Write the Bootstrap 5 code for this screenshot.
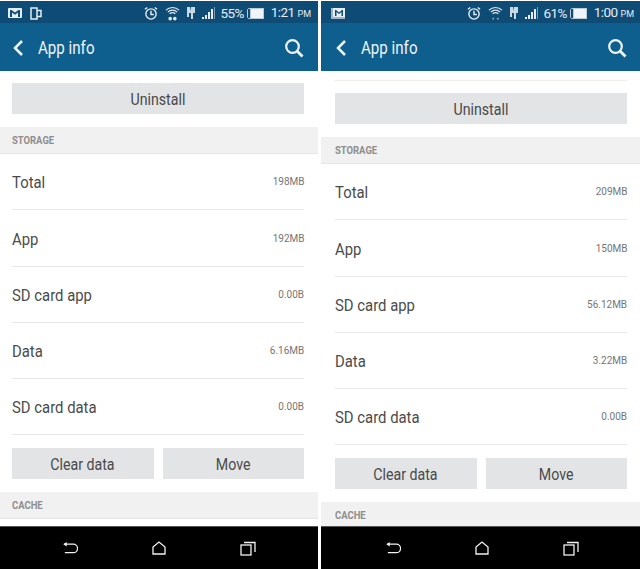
<!doctype html>
<html lang="en"><head><meta charset="utf-8"><title>App info</title>
<link rel="stylesheet" href="https://cdn.jsdelivr.net/npm/bootstrap@5.3.0/dist/css/bootstrap.min.css">
<style>
html,body{height:569px;overflow:hidden;background:#fff;font-family:Roboto,"Liberation Sans",sans-serif}
.shots{gap:3px;height:569px}
.phone{height:569px;overflow:hidden}
.phone-l{width:318px}.phone-r{width:319px}
.sbar{height:22px;margin-top:1px;background:#0e4b75;color:#e6eef4;font-size:13.5px;padding:2px 7px 0 8px;flex:none}
.sbar .pct{line-height:20px;letter-spacing:-.6px}
.sbar .clock{line-height:20px;letter-spacing:-.6px}
.sbar .ampm{font-size:9px;margin-left:3px;letter-spacing:0}
.g3{margin-left:3px}.g5{margin-left:5px}.g6{margin-left:6px}.g7{margin-left:7px}.g8{margin-left:8px}
.abar{height:48px;background:#0f5f8e;color:#eef4f8;flex:none;padding:2px 14px 0 12px}
.atitle{font-size:18px;margin:0 0 2px 14px;display:inline-block;transform:scaleX(.84);transform-origin:left center}
.scroll{flex:1 1 0;overflow:hidden;min-height:0}
.prerow-line{height:10px;border-bottom:1px solid #eeeeee;margin:0 13px 0 14px}
.pad-top{height:12px}
.gbtn{background:#e3e4e6;color:#4a4a4a;border:0;border-radius:0;height:31px;font-size:16.5px;padding:3px 0 0;display:flex;align-items:center;justify-content:center}
.gbtn span{display:inline-block;transform:scaleX(.86)}
.uwrap{padding:0 14px 0 12px}
.sect{background:#f1f1f1;color:#8e8e8e;font-size:10.5px;font-weight:700;padding:2px 0 0 12px;height:27px;margin-top:13px;display:flex;align-items:center;border-bottom:1px solid #e6e6e6}
.sect span{display:inline-block;transform:scaleX(.9);transform-origin:left center}
.irow{height:56.25px;margin:0 14px 0 12px;border-bottom:1px solid #e9e9e9;padding-top:3px}
.lbl{font-size:17px;color:#4b4b4b;display:inline-block;transform:scaleX(.875);transform-origin:left center}
.val{font-size:10.500px;color:#757575;display:inline-block;margin-bottom:2px;transform:scaleX(.95);transform-origin:right center}
.two{padding:13px 14px 0 12px;gap:9px}
.two .gbtn{flex:1 1 0}
.navb{height:43px;background:#000;flex:none;border-top:1px solid #555;padding-left:62px;gap:74px}
.phone-r .sbar{padding-left:10px;padding-right:6px}.phone-r .abar{padding-left:14px;padding-right:13px}
.phone-r .uwrap{padding:0 13px 0 14px}.phone-r .sect{padding-left:14px}
.phone-r .irow{margin:0 13px 0 14px}.phone-r .two{padding:13px 13px 0 14px}
.phone-r .navb{padding-left:64px}
</style></head><body>
<div class="d-flex shots">

<section class="phone phone-l d-flex flex-column">
 <div class="sbar d-flex align-items-center">
  <svg width="14" height="12" viewBox="0 0 14 12"><rect x="0" y="1" width="14" height="10" rx="1" fill="#e6eef4"/><path d="M2 3v7h2V5.500l3 2.200 3-2.200V10h2V3h-1.500L7 5.600 3.500 3z" fill="#0e4b75"/></svg>
  <svg class="g8" width="12" height="13" viewBox="0 0 12 13" fill="none" stroke="#e6eef4" stroke-width="1.500"><rect x="1" y="1" width="6" height="11"/><path d="M7 3.500h4v6H7"/></svg>
  <svg class="ms-auto" width="14" height="15" viewBox="0 0 15 16" fill="none" stroke="#e6eef4" stroke-width="1.500"><circle cx="7.500" cy="8.500" r="5.500"/><path d="M7.500 5v4h3M1 3.500 3.500 1.500M14 3.500 11.500 1.500"/></svg>
  <svg class="g7" width="15" height="16" viewBox="0 0 16 16" fill="none" stroke="#e6eef4" stroke-width="1.200"><path d="M1 5a10 10 0 0 1 14 0M3 7a7 7 0 0 1 10 0M5 9a4 4 0 0 1 6 0"/><circle cx="5.500" cy="14" r="1.300" fill="#e6eef4"/><circle cx="10.500" cy="14" r="1.300" fill="#e6eef4"/></svg>
  <svg class="g6" width="10" height="14" viewBox="0 0 10 14" fill="#c9d8e3"><path d="M1 1h3v4l1-4h4v6H7v6H5V7H3v4H1z"/></svg>
  <svg class="g6" width="14" height="12" viewBox="0 0 14 12" fill="#e6eef4"><rect x="0" y="10" width="2" height="2"/><rect x="3" y="8" width="2" height="4"/><rect x="6" y="5" width="2" height="7"/><rect x="9" y="2" width="2" height="10"/><rect x="12" y="0" width="1" height="12" opacity=".5"/></svg>
  <span class="pct g5">55%</span>
  <svg class="g3" width="17" height="11" viewBox="0 0 17 11" fill="none"><path d="M3 .5H1.500l-1 1v8l1 1H3" stroke="#b9cbd8"/><rect x="4" y="1" width="12.500" height="9" fill="#eef4f8"/><rect x="3.500" y=".5" width="13" height="10" stroke="#b9cbd8"/></svg>
  <span class="clock g7">1:21<span class="ampm">PM</span></span>
 </div>
 <div class="abar d-flex align-items-center">
  <svg width="12" height="18" viewBox="0 0 12 18" fill="none" stroke="#eef4f8" stroke-width="2.500"><path d="M10 2 3 9l7 7"/></svg>
  <span class="atitle">App info</span>
  <svg class="ms-auto" width="20" height="20" viewBox="0 0 20 20" fill="none" stroke="#eef4f8" stroke-width="2.200"><circle cx="8.500" cy="8.500" r="6.300"/><path d="m13 13 5.500 5.500" stroke-width="2.800"/></svg>
 </div>
 <div class="scroll">
  <div class="pad-top"></div>
  <div class="uwrap"><button class="btn gbtn w-100"><span>Uninstall</span></button></div>
  <div class="sect"><span>STORAGE</span></div>
  <div class="irow d-flex justify-content-between align-items-center"><span class="lbl">Total</span><span class="val">198MB</span></div>
  <div class="irow d-flex justify-content-between align-items-center"><span class="lbl">App</span><span class="val">192MB</span></div>
  <div class="irow d-flex justify-content-between align-items-center"><span class="lbl">SD card app</span><span class="val">0.00B</span></div>
  <div class="irow d-flex justify-content-between align-items-center"><span class="lbl">Data</span><span class="val">6.16MB</span></div>
  <div class="irow d-flex justify-content-between align-items-center"><span class="lbl">SD card data</span><span class="val">0.00B</span></div>
  <div class="two d-flex"><button class="btn gbtn"><span>Clear data</span></button><button class="btn gbtn"><span>Move</span></button></div>
  <div class="sect"><span>CACHE</span></div>
 </div>
 <div class="navb d-flex align-items-center">
  <svg width="16" height="14" viewBox="0 0 17 14" fill="none" stroke="#f2f2f2" stroke-width="1.300"><path d="M2 3h10a3.800 3.800 0 0 1 0 9H3"/><path d="M5 .5 1.500 3 5 5.500" fill="#f2f2f2" stroke="none"/></svg>
  <svg width="14" height="14" viewBox="0 0 14 14" fill="none" stroke="#f2f2f2" stroke-width="1.300"><path d="M1 13V6l6-5 6 5v7z"/></svg>
  <svg width="16" height="15" viewBox="0 0 16 15" fill="none" stroke="#f2f2f2" stroke-width="1.300"><rect x="1" y="4" width="10" height="10"/><path d="M4 1.500h11V11"/></svg>
 </div>
</section>

<section class="phone phone-r d-flex flex-column">
 <div class="sbar d-flex align-items-center">
  <svg width="14" height="13" viewBox="0 0 14 13"><rect x="0" y="1" width="14" height="11" fill="#9db6c8"/><rect x="2" y="1" width="12" height="9" fill="#e6eef4"/><path d="M4 3v6h1.500V5l2.500 2 2.500-2v4H12V3h-1L8 5.500 5 3z" fill="#0e4b75"/></svg>
  <svg class="ms-auto" width="14" height="15" viewBox="0 0 15 16" fill="none" stroke="#e6eef4" stroke-width="1.500"><circle cx="7.500" cy="8.500" r="5.500"/><path d="M7.500 5v4h3M1 3.500 3.500 1.500M14 3.500 11.500 1.500"/></svg>
  <svg class="g7" width="15" height="16" viewBox="0 0 16 16" fill="none" stroke="#dce7ef" stroke-width="1.200"><path d="M1 5a10 10 0 0 1 14 0M3 7a7 7 0 0 1 10 0M5 9a4 4 0 0 1 6 0"/><circle cx="5.500" cy="14" r="1" fill="#9db6c8" stroke="none"/><circle cx="10.500" cy="14" r="1" fill="#9db6c8" stroke="none"/></svg>
  <svg class="g6" width="10" height="14" viewBox="0 0 10 14" fill="#c9d8e3"><path d="M1 1h3v4l1-4h4v6H7v6H5V7H3v4H1z"/></svg>
  <svg class="g6" width="14" height="12" viewBox="0 0 14 12" fill="#e6eef4"><rect x="0" y="10" width="2" height="2"/><rect x="3" y="8" width="2" height="4"/><rect x="6" y="5" width="2" height="7"/><rect x="9" y="2" width="2" height="10"/><rect x="12" y="0" width="1" height="12" opacity=".5"/></svg>
  <span class="pct g5">61%</span>
  <svg class="g3" width="17" height="11" viewBox="0 0 17 11" fill="none"><path d="M3 .5H1.500l-1 1v8l1 1H3" stroke="#b9cbd8"/><rect x="4" y="1" width="12.500" height="9" fill="#eef4f8"/><rect x="3.500" y=".5" width="13" height="10" stroke="#b9cbd8"/></svg>
  <span class="clock g7">1:00<span class="ampm">PM</span></span>
 </div>
 <div class="abar d-flex align-items-center">
  <svg width="12" height="18" viewBox="0 0 12 18" fill="none" stroke="#eef4f8" stroke-width="2.500"><path d="M10 2 3 9l7 7"/></svg>
  <span class="atitle">App info</span>
  <svg class="ms-auto" width="20" height="20" viewBox="0 0 20 20" fill="none" stroke="#eef4f8" stroke-width="2.200"><circle cx="8.500" cy="8.500" r="6.300"/><path d="m13 13 5.500 5.500" stroke-width="2.800"/></svg>
 </div>
 <div class="scroll">
  <div class="prerow-line"></div>
  <div class="pad-top"></div>
  <div class="uwrap"><button class="btn gbtn w-100"><span>Uninstall</span></button></div>
  <div class="sect"><span>STORAGE</span></div>
  <div class="irow d-flex justify-content-between align-items-center"><span class="lbl">Total</span><span class="val">209MB</span></div>
  <div class="irow d-flex justify-content-between align-items-center"><span class="lbl">App</span><span class="val">150MB</span></div>
  <div class="irow d-flex justify-content-between align-items-center"><span class="lbl">SD card app</span><span class="val">56.12MB</span></div>
  <div class="irow d-flex justify-content-between align-items-center"><span class="lbl">Data</span><span class="val">3.22MB</span></div>
  <div class="irow d-flex justify-content-between align-items-center"><span class="lbl">SD card data</span><span class="val">0.00B</span></div>
  <div class="two d-flex"><button class="btn gbtn"><span>Clear data</span></button><button class="btn gbtn"><span>Move</span></button></div>
  <div class="sect"><span>CACHE</span></div>
 </div>
 <div class="navb d-flex align-items-center">
  <svg width="16" height="14" viewBox="0 0 17 14" fill="none" stroke="#f2f2f2" stroke-width="1.300"><path d="M2 3h10a3.800 3.800 0 0 1 0 9H3"/><path d="M5 .5 1.500 3 5 5.500" fill="#f2f2f2" stroke="none"/></svg>
  <svg width="14" height="14" viewBox="0 0 14 14" fill="none" stroke="#f2f2f2" stroke-width="1.300"><path d="M1 13V6l6-5 6 5v7z"/></svg>
  <svg width="16" height="15" viewBox="0 0 16 15" fill="none" stroke="#f2f2f2" stroke-width="1.300"><rect x="1" y="4" width="10" height="10"/><path d="M4 1.500h11V11"/></svg>
 </div>
</section>

</div>
<script src="https://cdn.jsdelivr.net/npm/bootstrap@5.3.0/dist/js/bootstrap.bundle.min.js"></script>
</body></html>
